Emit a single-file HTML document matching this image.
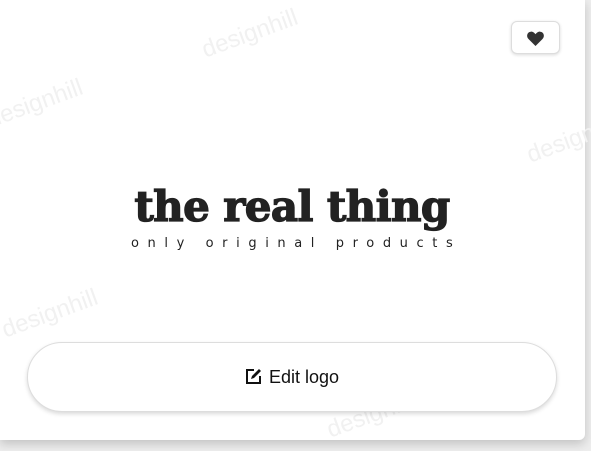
<!DOCTYPE html>
<html><head><meta charset="utf-8"><style>
html,body{margin:0;padding:0;width:591px;height:451px;overflow:hidden;background:#ededed;font-family:"Liberation Sans",sans-serif}
.card{position:absolute;left:0;top:0;width:585px;height:440px;background:#fff;border-radius:0 0 6px 0;box-shadow:0 4px 10px rgba(0,0,0,.18)}
.wm{position:absolute;color:#f1f1f1;font-size:24px;transform:rotate(-20deg);font-family:"Liberation Sans",sans-serif}
.fav{position:absolute;left:511px;top:21px;width:47px;height:31px;border:1px solid #ddd;border-radius:6px;background:#fff;box-shadow:0 1px 3px rgba(0,0,0,.15)}
.title{position:absolute;left:122px;top:182px;width:340px;text-align:center;font-family:"DejaVu Serif",serif;font-weight:bold;font-size:42px;letter-spacing:-0.6px;color:#222;white-space:nowrap;-webkit-text-stroke:1.3px #222}
.sub{position:absolute;left:131px;top:236px;font-family:"DejaVu Sans",sans-serif;font-size:13px;letter-spacing:8.6px;color:#222;white-space:nowrap}
.btn{position:absolute;left:27px;top:342px;width:528px;height:68px;border:1px solid #ddd;border-radius:35px;background:#fff;box-shadow:0 2px 4px rgba(0,0,0,.15);text-align:center;line-height:68px;font-size:18px;color:#111}
</style></head><body>
<div class="card">
<div class="wm" style="left:200px;top:20px">designhill</div>
<div class="wm" style="left:-15px;top:90px">designhill</div>
<div class="wm" style="left:525px;top:125px">designhill</div>
<div class="wm" style="left:0px;top:300px">designhill</div>
<div class="wm" style="left:325px;top:400px">designhill</div>
<div class="fav"><svg width="47" height="31" viewBox="0 0 47 31"><path d="M23.5 24 L16.5 17 C14 14.5 15 10 18.8 9.7 C21 9.5 22.5 11 23.5 12.3 C24.5 11 26 9.5 28.2 9.7 C32 10 33 14.5 30.5 17 Z" fill="#333"/></svg></div>
<div class="title">the real thing</div>
<div class="sub">only original products</div>
<div class="btn"><svg width="18" height="18" viewBox="0 0 18 18" style="vertical-align:-2px;margin-right:6px"><path d="M9 3H2v13h13V9" fill="none" stroke="#111" stroke-width="2"/><path d="M6 12l1-3 7-7 2 2-7 7z" fill="#111"/></svg>Edit logo</div>
</div>
</body></html>
